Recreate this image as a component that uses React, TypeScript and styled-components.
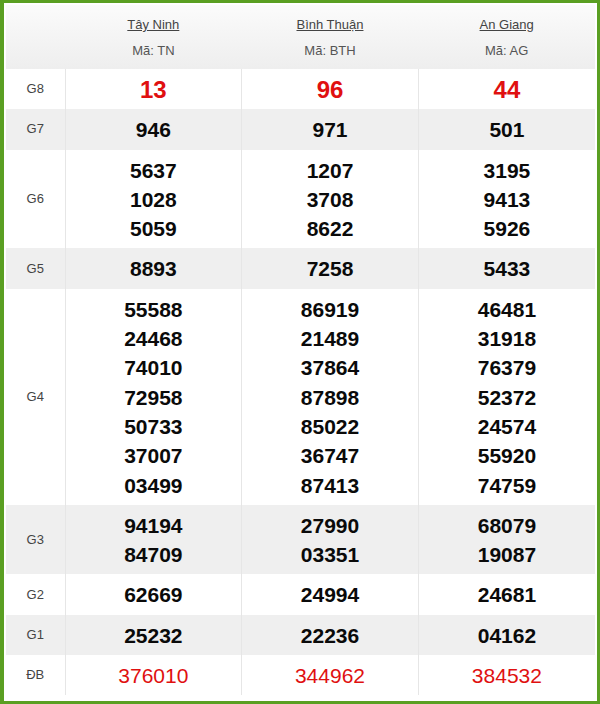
import { createGlobalStyle } from "styled-components"
import styled from "styled-components"

const GlobalStyle = createGlobalStyle`
  html, body {
    margin: 0;
    padding: 0;
    background: #fff;
  }
  body {
    font-family: Arial, "Liberation Sans", sans-serif;
  }
`

const Frame = styled.div`
  box-sizing: border-box;
  width: 600px;
  height: 704px;
  border: 3px solid #5a9f22;
  border-left-width: 4px;
  padding: 2px 2px 3px 2px;
  background: #fff;
`

const Table = styled.table`
  width: 100%;
  border-collapse: collapse;
  table-layout: fixed;
`

const HeadCell = styled.th`
  background: linear-gradient(#fbfbfb, #eeeeee);
  height: 62px;
  padding: 2px 0 0;
  font-weight: normal;
  text-align: center;
  vertical-align: middle;
`

const Province = styled.a`
  display: block;
  font-size: 13px;
  line-height: 16px;
  color: #444;
  text-decoration: underline;
  margin-bottom: 10px;
`

const Code = styled.div`
  font-size: 13px;
  line-height: 16px;
  color: #555;
`

const Row = styled.tr<{ $shade: boolean }>`
  background: ${({ $shade }) => ($shade ? "#efefef" : "#fff")};
`

const Label = styled.td`
  width: 59px;
  padding: 0;
  font-size: 13px;
  line-height: 16px;
  color: #444;
  text-align: center;
  vertical-align: middle;
  border-right: 1px solid #e6e6e6;
`

const Cell = styled.td`
  padding: 6px 0 5px;
  text-align: center;
  vertical-align: middle;
  border-left: 1px solid #e6e6e6;
`

const Num = styled.div<{ $kind: "big" | "normal" | "special" }>`
  height: 29.3px;
  line-height: 29px;
  font-size: ${({ $kind }) => ($kind === "big" ? "24px" : "21px")};
  font-weight: ${({ $kind }) => ($kind === "special" ? "normal" : "bold")};
  color: ${({ $kind }) => ($kind === "normal" ? "#0a0a0a" : "#e01010")};
`

const provinces = [
  { name: "Tây Ninh", code: "TN" },
  { name: "Bình Thuận", code: "BTH" },
  { name: "An Giang", code: "AG" },
]

const prizes: { label: string; kind: "big" | "normal" | "special"; values: string[][] }[] = [
  { label: "G8", kind: "big", values: [["13"], ["96"], ["44"]] },
  { label: "G7", kind: "normal", values: [["946"], ["971"], ["501"]] },
  {
    label: "G6",
    kind: "normal",
    values: [
      ["5637", "1028", "5059"],
      ["1207", "3708", "8622"],
      ["3195", "9413", "5926"],
    ],
  },
  { label: "G5", kind: "normal", values: [["8893"], ["7258"], ["5433"]] },
  {
    label: "G4",
    kind: "normal",
    values: [
      ["55588", "24468", "74010", "72958", "50733", "37007", "03499"],
      ["86919", "21489", "37864", "87898", "85022", "36747", "87413"],
      ["46481", "31918", "76379", "52372", "24574", "55920", "74759"],
    ],
  },
  {
    label: "G3",
    kind: "normal",
    values: [
      ["94194", "84709"],
      ["27990", "03351"],
      ["68079", "19087"],
    ],
  },
  { label: "G2", kind: "normal", values: [["62669"], ["24994"], ["24681"]] },
  { label: "G1", kind: "normal", values: [["25232"], ["22236"], ["04162"]] },
  { label: "ĐB", kind: "special", values: [["376010"], ["344962"], ["384532"]] },
]

export default function App() {
  return (
    <>
      <GlobalStyle />
      <Frame>
        <Table>
          <colgroup>
            <col style={{ width: 59 }} />
            <col />
            <col />
            <col />
          </colgroup>
          <thead>
            <tr>
              <HeadCell />
              {provinces.map((p) => (
                <HeadCell key={p.code}>
                  <Province>{p.name}</Province>
                  <Code>Mã: {p.code}</Code>
                </HeadCell>
              ))}
            </tr>
          </thead>
          <tbody>
            {prizes.map((prize, i) => (
              <Row key={prize.label} $shade={i % 2 === 1}>
                <Label>{prize.label}</Label>
                {prize.values.map((col, j) => (
                  <Cell key={j}>
                    {col.map((v, k) => (
                      <Num key={k} $kind={prize.kind}>
                        {v}
                      </Num>
                    ))}
                  </Cell>
                ))}
              </Row>
            ))}
          </tbody>
        </Table>
      </Frame>
    </>
  )
}
